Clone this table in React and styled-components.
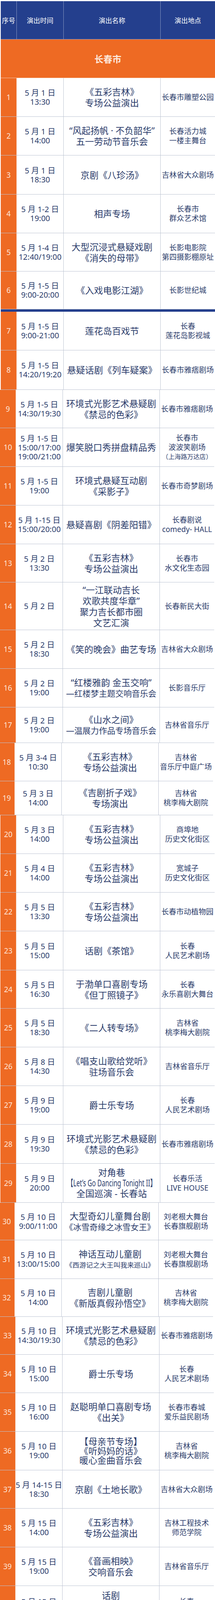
import styled, { createGlobalStyle } from 'styled-components';

const GlobalStyle = createGlobalStyle`
  html, body {
    margin: 0;
    padding: 0;
    background: #fff;
  }
  body {
    font-family: "Noto Sans", "Noto Sans CJK SC", sans-serif;
    color: #2b3c6b;
  }
`;

const NAVY = '#243f8d';
const ORANGE = '#ee6a23';
const LINE = '#bcc3d2';

const Page = styled.div`
  width: 550px;
  padding-top: 3px;
  overflow: hidden;
`;

const Grid = styled.div`
  display: grid;
  grid-template-columns: 41px 120px 248px 139px;
  width: 548px;
  margin-left: ${p => 2 + (p.$shift || 0)}px;
  box-sizing: border-box;
`;

const HeadRow = styled(Grid)`
  height: 98px;
  background: ${NAVY};
  border-bottom: 1px solid rgba(255, 255, 255, 0.5);
`;

const HeadCell = styled.div`
  display: flex;
  align-items: center;
  justify-content: center;
  color: #fff;
  font-size: 17px;
  white-space: nowrap;
  border-right: 1px solid rgba(255, 255, 255, 0.45);
  &:last-child { border-right: none; }
`;

const CityRow = styled.div`
  height: 99px;
  margin-left: 2px;
  width: 548px;
  box-sizing: border-box;
  background: ${ORANGE};
  border-bottom: 1px solid #f4c7ad;
  display: flex;
  align-items: center;
  justify-content: center;
  color: #fde8dc;
  font-size: 23px;
  font-weight: 700;
  font-family: "Noto Sans CJK SC", sans-serif;
`;

const Row = styled(Grid)`
  height: ${p => p.$h}px;
  border-bottom: 1px solid ${LINE};
  border-top: ${p => (p.$thick ? `6px solid ${NAVY}` : 'none')};
`;

const Cell = styled.div`
  display: flex;
  flex-direction: column;
  align-items: center;
  justify-content: center;
  border-right: 1px solid ${LINE};
  min-width: 0;
  min-height: 0;
  &:last-child { border-right: none; }
`;

const SeqCell = styled(Cell)`
  background: ${ORANGE};
  color: #fde4d6;
  font-size: 19px;
  border-right: 1px solid #f2d6c6;
`;

const DateCell = styled(Cell)`
  font-size: 20px;
  line-height: 23px;
`;

const NameCell = styled(Cell)`
  font-size: 23px;
  line-height: ${p => p.$lh || 28}px;
`;

const VenueCell = styled(Cell)`
  font-size: 19px;
  line-height: 24px;
`;

const Line = styled.span`
  display: block;
  white-space: nowrap;
  font-size: ${p => (p.$f ? `${p.$f}px` : 'inherit')};
  transform: ${p => (p.$sx ? `scaleX(${p.$sx})` : 'none')};
`;

const WCJL = ['《五彩吉林》', '专场公益演出'];
const JJR = ['话剧', '《经济人·经济事系列—', '擎动春秋》'];

const rows = [
  { d: ['5 月 1 日', '13:30'], t: WCJL, v: ['长春市雕塑公园'], h: 99 },
  { d: ['5 月 1 日', '14:00'], t: ['“风起扬帆 · 不负韶华”', '五一劳动节音乐会'], v: ['长春活力城', '一楼主舞台'], h: 99 },
  { d: ['5 月 1 日', '18:30'], t: ['京剧《八珍汤》'], v: ['吉林省大众剧场'], h: 100 },
  { d: ['5 月 1-2 日', '19:00'], t: ['相声专场'], v: ['长春市', '群众艺术馆'], h: 99 },
  { d: ['5 月 1-4 日', '12:40/19:00'], t: ['大型沉浸式悬疑戏剧', '《消失的母带》'], v: ['长影电影院', '第四摄影棚原址'], h: 98 },
  { d: ['5 月 1-5 日', '9:00-20:00'], t: ['《入戏电影江湖》'], v: ['长影世纪城'], h: 97 },
  { d: ['5 月 1-5 日', '9:00-21:00'], t: ['莲花岛百戏节'], v: ['长春', '莲花岛影视城'], h: 105, thick: true },
  { d: ['5 月 1-5 日', '14:20/19:20'], t: ['悬疑话剧《列车疑案》'], v: ['长春市雅痞剧场'], h: 101 },
  { d: ['5 月 1-5 日', '14:30/19:30'], t: ['环境式光影艺术悬疑剧', '《禁忌的色彩》'], v: ['长春市雅痞剧场'], h: 98 },
  { d: ['5 月 1-5 日', '15:00/17:00', '19:00/21:00'], t: ['爆笑脱口秀拼盘精品秀'], v: ['长春市', '波波笑剧场', { x: '（上海路万达店）', f: 16 }], h: 99 },
  { d: ['5 月 1-5 日', '19:00'], t: ['环境式悬疑互动剧', '《采影子》'], v: ['长春市奇梦剧场'], h: 99 },
  { d: ['5 月 1-15 日', '15:00/20:00'], t: ['悬疑喜剧《阴差阳错》'], v: ['长春剧说', 'comedy- HALL'], h: 99 },
  { d: ['5 月 2 日', '13:30'], t: WCJL, v: ['长春市', '水文化生态园'], h: 98 },
  { d: ['5 月 2 日'], t: ['“一江联动吉长', '欢歌共度华章”', '聚力吉长都市圈', '文艺汇演'], v: ['长春新民大街'], h: 122 },
  { d: ['5 月 2 日', '18:30'], t: ['《笑的晚会》曲艺专场'], v: ['吉林省大众剧场'], h: 99 },
  { d: ['5 月 2 日', '19:00'], t: ['“红楼雅韵 金玉交响”', { x: '—红楼梦主题交响音乐会', f: 21 }], v: ['长影音乐厅'], h: 99 },
  { d: ['5 月 2 日', '19:00'], t: ['《山水之间》', { x: '—温展力作品专场音乐会', f: 21 }], v: ['吉林省音乐厅'], h: 91 },
  { d: ['5 月 3-4 日', '10:30'], t: WCJL, v: ['吉林省', '音乐厅中庭广场'], h: 98 },
  { d: ['5 月 3 日', '14:00'], t: ['《吉剧折子戏》', '专场演出'], v: ['吉林省', '桃李梅大剧院'], h: 87 },
  { d: ['5 月 3 日', '14:00'], t: WCJL, v: ['商埠地', '历史文化街区'], h: 99 },
  { d: ['5 月 4 日', '14:00'], t: WCJL, v: ['宽城子', '历史文化街区'], h: 99 },
  { d: ['5 月 5 日', '13:30'], t: WCJL, v: ['长春市动植物园'], h: 99 },
  { d: ['5 月 5 日', '15:00'], t: ['话剧《茶馆》'], v: ['长春', '人民艺术剧场'], h: 100 },
  { d: ['5 月 5 日', '16:30'], t: ['于渤单口喜剧专场', '《但丁照镜子》'], v: ['长春', '永乐喜剧大舞台'], h: 98 },
  { d: ['5 月 5 日', '18:30'], t: ['《二人转专场》'], v: ['吉林省', '桃李梅大剧院'], h: 99 },
  { d: ['5 月 8 日', '14:30'], t: ['《唱支山歌给党听》', '驻场音乐会'], v: ['吉林省音乐厅'], h: 99 },
  { d: ['5 月 9 日', '19:00'], t: ['爵士乐专场'], v: ['长春', '人民艺术剧场'], h: 99 },
  { d: ['5 月 9 日', '19:30'], t: ['环境式光影艺术悬疑剧', '《禁忌的色彩》'], v: ['长春市雅痞剧场'], h: 100 },
  { d: ['5 月 9 日', '20:00'], t: ['对角巷', { x: '【Let\u2019s Go Dancing Tonight II】', sx: 0.68 }, '全国巡演 - 长春站'], v: ['长春乐活', 'LIVE HOUSE'], h: 100, lh: 27 },
  { d: ['5 月 10 日', '9:00/11:00'], t: ['大型奇幻儿童舞台剧', { x: '《冰雪奇缘之冰雪女王》', f: 21 }], v: ['刘老根大舞台', '长春旗舰剧场'], h: 96 },
  { d: ['5 月 10 日', '13:00/15:00'], t: ['神话互动儿童剧', { x: '《西游记之大王叫我来巡山》', f: 17.5 }], v: ['刘老根大舞台', '长春旗舰剧场'], h: 99 },
  { d: ['5 月 10 日', '14:00'], t: ['吉剧儿童剧', '《新版真假孙悟空》'], v: ['吉林省', '桃李梅大剧院'], h: 97 },
  { d: ['5 月 10 日', '14:30/19:30'], t: ['环境式光影艺术悬疑剧', '《禁忌的色彩》'], v: ['长春市雅痞剧场'], h: 97 },
  { d: ['5 月 10 日', '15:00'], t: ['爵士乐专场'], v: ['长春', '人民艺术剧场'], h: 98 },
  { d: ['5 月 10 日', '16:00'], t: ['赵聪明单口喜剧专场', '《出关》'], v: ['长春市春城', '爱乐益民剧场'], h: 99 },
  { d: ['5 月 10 日', '19:00'], t: ['【母亲节专场】', '《听妈妈的话》', '暖心金曲音乐会'], v: ['吉林省', '桃李梅大剧院'], h: 99, lh: 24 },
  { d: ['5 月 14-15 日', '18:30'], t: ['京剧《土地长歌》'], v: ['吉林省大众剧场'], h: 98 },
  { d: ['5 月 15 日', '14:00'], t: WCJL, v: ['吉林工程技术', '师范学院'], h: 99 },
  { d: ['5 月 15 日', '19:00'], t: ['《音画相映》', '交响音乐会'], v: ['吉林省音乐厅'], h: 99 },
  { d: ['5 月 15 日', '19:00'], t: JJR, v: ['长春', '人民艺术剧场'], h: 105 },
  { d: ['5 月 16 日', '14:00'], t: JJR, v: ['长春', '人民艺术剧场'], h: 105 },
  { d: ['5 月 15 日', '19:30'], t: ['开心麻花主题', { x: '体验式喜剧《偷心晚宴》', f: 21.5 }], v: ['长春市长白山', '宾馆一楼宴会厅'], h: 97 },
  { d: ['5 月 16 日', '20:00'], t: ['春山后潮【马上迷幻】', '2026 巡演—长春站'], v: ['长春 GOIN LIVE', '观来福'], h: 98 },
  { d: ['5 月 17 日', '19:30'], t: ['亚洲大型全男班', '现代舞秀《无名之辈》'], v: ['长春国际会议', '中心主会场'], h: 98 },
  { d: ['5 月 16 日', '19:00'], t: ['《国韵和鸣》', '交响音乐会'], v: ['长影音乐厅'], h: 96 },
  { d: ['5 月 20 日', '19:30'], t: ['【520 专场】', '“不能说的秘密”', '沉浸式烛光音乐会', '—长春站'], v: ['长春市', '工人文化宫', '2 楼 1 号厅'], h: 113 },
  { d: ['5 月 21 日', '20:00'], t: ['文雀乐队', '【两语】巡演—长春站'], v: ['长春乐活', 'LIVE HOUSE'], h: 99 },
  { d: ['5 月 22 日', '19:00'], t: ['话剧《杨靖宇》'], v: ['长春', '人民艺术剧场'], h: 99 },
  { d: ['5 月 22 日', '20:00'], t: ['【云难】景德镇文艺复', '兴舞台作品 2026 巡演', '—长春站'], v: ['长春 GOIN LIVE', '观来福'], h: 98 },
  { d: ['5 月 23-24 日', '13:30'], t: ['2026 长春哦啦音乐节 ·', '向北之旅'], v: ['长春东北亚国际', '博览中心'], h: 98 },
  { d: ['5 月 23 日', '14:00'], t: ['话剧《杨靖宇》'], v: ['长春', '人民艺术剧场'], h: 99 },
  { d: ['5 月 23 日', '20:00'], t: ['反光镜 2026', '《会反光的你》', '新专辑巡演—长春站'], v: ['长春乐活', 'LIVE HOUSE'], h: 98 },
  { d: ['5 月 24 日', '14:00'], t: ['儿童剧', '《屁屁老爹 & 屁屁侦探', '—伟大的联手》', '—长春站'], v: ['长春', '人民艺术剧场'], h: 126, lh: 27.5 },
  { d: ['5 月 24 日', '20:00'], t: ['Mr.Enjoy Da Melody', '2026 巡回演唱会'], v: ['长春 GOIN LIVE', '观来福'], h: 99 },
  { d: ['5 月 25 日', '18:30'], t: ['吉剧《积德泉》'], v: ['长春', '电子科技学院'], h: 85 },
  { d: ['5 月 28 日', '19:00'], t: ['“城市 · 时光的弧线”', '交响音乐会'], v: ['长影音乐厅'], h: 93 },
  { d: ['5 月 29 日', '18:30'], t: ['京剧《雏凤凌空》'], v: ['吉林省大众剧场'], h: 85 },
  { d: ['5 月 29 日', '19:00'], t: ['《国潮新民乐 2》', '音乐会'], v: ['吉林省音乐厅'], h: 84 },
];

// the source table was pasted together from several images, so some blocks sit a few px to the left
const shiftFor = n => {
  if (n <= 8) return 0;
  if (n <= 17) return -2;
  if (n <= 19) return -5;
  if (n <= 29) return -1;
  if (n <= 32) return -5;
  if (n <= 45) return -3;
  if (n <= 56) return -1;
  return -3;
};

const Lines = ({ items }) =>
  items.map((l, i) =>
    typeof l === 'string' ? (
      <Line key={i}>{l}</Line>
    ) : (
      <Line key={i} $f={l.f} $sx={l.sx}>{l.x}</Line>
    )
  );

const App = () => (
  <>
    <GlobalStyle />
    <Page>
      <HeadRow>
        <HeadCell>序号</HeadCell>
        <HeadCell>演出时间</HeadCell>
        <HeadCell>演出名称</HeadCell>
        <HeadCell>演出地点</HeadCell>
      </HeadRow>
      <CityRow>长春市</CityRow>
      {rows.map((r, i) => (
        <Row key={i} $h={r.h} $thick={r.thick} $shift={shiftFor(i + 1)}>
          <SeqCell>{i + 1}</SeqCell>
          <DateCell><Lines items={r.d} /></DateCell>
          <NameCell $lh={r.lh}><Lines items={r.t} /></NameCell>
          <VenueCell><Lines items={r.v} /></VenueCell>
        </Row>
      ))}
    </Page>
  </>
);

export default App;
